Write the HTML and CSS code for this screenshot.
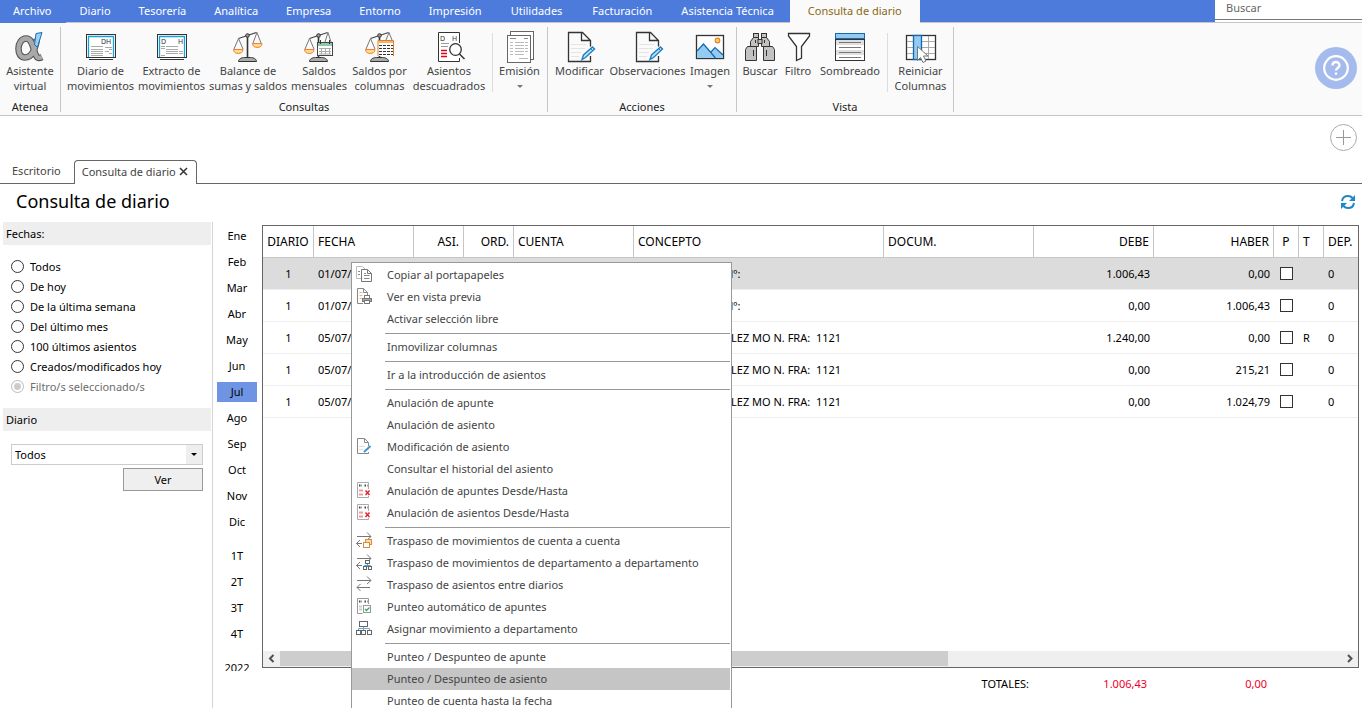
FILE: index.html
```html
<!DOCTYPE html>
<html lang="es">
<head>
<meta charset="utf-8">
<title>Consulta de diario</title>
<link rel="stylesheet" href="styles.css">
</head>
<body>
<svg class="sprite" aria-hidden="true">
  <symbol id="scale-left" viewBox="0 0 32 32">
    <path d="M15.500 5v22" fill="none" stroke="#333" stroke-width="1.600"/>
    <path d="M6.500 7.500l9-3M15.500 4.500l9-3" fill="none" stroke="#444" stroke-width="1.300"/>
    <circle cx="15.500" cy="4.500" r="1.800" fill="#999" stroke="#333"/>
    <path d="M6.500 7.500L2 18M6.500 7.500L11 18" fill="none" stroke="#777"/>
    <path d="M1.500 18.500h9.500c0 2.500-2 4-4.700 4s-4.800-1.500-4.800-4z" fill="#ffd98c" stroke="#ee8133"/>
    <path d="M6.500 30.500c0-2.500 3-4 6-4h6c3 0 6 1.500 6 4z" fill="#aaa" stroke="#333"/>
  </symbol>
  <symbol id="page-edit" viewBox="0 0 32 32">
    <path d="M26.500 25v5.500h-22v-29h14l8 8v6M17.500 1.500v8h9" fill="none" stroke="#333" stroke-width="1.300"/>
    <path d="M7 13.500h15M7 17.500h14M7 21.500h10M7 25.500h8" stroke="#e4e4e4"/>
    <path d="M18 28.500l1.500-4.500 9-8 2 2-9 8.500z" fill="#bfe2f7" stroke="#1e80c4" stroke-width="1.400"/>
    <path d="M26.500 17.500l2.500 2.500" stroke="#1e80c4"/>
  </symbol>
  <symbol id="doc-delete" viewBox="0 0 16 16">
    <path d="M12.500 7V.500h-11v15h11V14" fill="none" stroke="#aaa"/>
    <path d="M3 3.500h3M8.500 3.500h3" stroke="#444" stroke-width="2" stroke-dasharray="1.500 1"/>
    <path d="M3 8.500h4M3 12.500h4" stroke="#f19a9a" stroke-width="2"/>
    <path d="M9.500 8.500l4 4.500M13.500 8.500l-4 4.500" stroke="#e3262b" stroke-width="1.500"/>
  </symbol>
  <symbol id="arrow-right" viewBox="0 0 16 16">
    <path d="M1 4.500h14M11 .500l4 4-4 3.500" fill="none" stroke="#777"/>
  </symbol>
</svg>

<header class="topbar">
  <nav class="menubar" aria-label="Menú principal">
    <button class="menu-file">Archivo</button>
    <button>Diario</button>
    <button>Tesorería</button>
    <button>Analítica</button>
    <button>Empresa</button>
    <button>Entorno</button>
    <button>Impresión</button>
    <button class="menu-wide">Utilidades</button>
    <button class="menu-wide">Facturación</button>
    <button>Asistencia Técnica</button>
    <button class="menu-active">Consulta de diario</button>
  </nav>
  <div class="search"><input type="text" placeholder="Buscar" aria-label="Buscar"></div>
</header>

<section class="ribbon" aria-label="Cinta de opciones">
  <div class="group">
    <div class="tools tools-atenea">
      <button class="tool">
        <svg viewBox="0 0 32 32" aria-hidden="true">
          <path d="M23 8c-2 11-5 18.500-12 18.500-4.500 0-6.500-4-6.500-9s3-10 7.500-10c7 0 7 11 10 17 1 2.500 3 3 6 1.500" fill="none" stroke="#555" stroke-width="6.600"/>
          <path d="M23 8c-2 11-5 18.500-12 18.500-4.500 0-6.500-4-6.500-9s3-10 7.500-10c7 0 7 11 10 17 1 2.500 3 3 6 1.500" fill="none" stroke="#a9a9a9" stroke-width="4.400"/>
          <path d="M22 2.500l6-1-4.500 14.500-3-2z" fill="#9bd0f5" stroke="#1a6fb5"/>
        </svg>
        <span>Asistente virtual</span>
      </button>
    </div>
    <div class="group-name">Atenea</div>
  </div>

  <div class="group">
    <div class="tools tools-consultas">
      <button class="tool">
        <svg viewBox="0 0 32 32" aria-hidden="true">
          <rect x="1.500" y="3.500" width="29" height="23" fill="#fff" stroke="#333"/>
          <path d="M3.500 26V5.500h25V26" fill="none" stroke="#16a0dc" stroke-width="1.300"/>
          <text class="icon-text" x="16" y="13">DH</text>
          <path d="M6 15.500h12M20 16.500h7M6 18.500h12M6 20.500h12M6 22.500h12M20 20.500h4M24 18.500h3M24 22.500h3M6 24.500h12" stroke="#aaa"/>
          <path d="M4 28.500h24" stroke="#333"/>
        </svg>
        <span>Diario de movimientos</span>
      </button>
      <button class="tool">
        <svg viewBox="0 0 32 32" aria-hidden="true">
          <rect x="1.500" y="3.500" width="29" height="23" fill="#fff" stroke="#333"/>
          <path d="M3.500 26V5.500h25V26" fill="none" stroke="#16a0dc" stroke-width="1.300"/>
          <text class="icon-text" x="5" y="13">D</text>
          <text class="icon-text" x="22" y="13">H</text>
          <path d="M5 15.500h4M10 15.500h12M5 17.500h4M10 18.500h12M10 20.500h12M10 22.500h12M23 20.500h4M23 22.500h4M5 24.500h4" stroke="#aaa"/>
          <path d="M4 28.500h24" stroke="#333"/>
        </svg>
        <span>Extracto de movimientos</span>
      </button>
      <button class="tool">
        <svg viewBox="0 0 32 32" aria-hidden="true">
          <use href="#scale-left"/>
          <path d="M25 1.500L21 12M25 1.500L29 12" stroke="#777"/>
          <path d="M20.500 12.500h9.500c0 2.500-2 4-4.700 4s-4.800-1.500-4.800-4z" fill="#ffd98c" stroke="#ee8133"/>
        </svg>
        <span>Balance de sumas y saldos</span>
      </button>
      <button class="tool">
        <svg viewBox="0 0 32 32" aria-hidden="true">
          <use href="#scale-left"/>
          <path d="M25 1.500L22 11M25 1.500L28 11" stroke="#777"/>
          <rect x="14.500" y="11.500" width="15" height="13" fill="#fff" stroke="#444"/>
          <path d="M15 13.500h14" stroke="#8fc9a3" stroke-width="3"/>
          <path d="M17.500 9v4M26.500 9v4" stroke="#333"/>
          <path d="M16 17.500h12M16 20.500h12M18.500 17v6M22.500 17v6M26.500 17v6M16 23h12" stroke="#aaa"/>
        </svg>
        <span>Saldos mensuales</span>
      </button>
      <button class="tool">
        <svg viewBox="0 0 32 32" aria-hidden="true">
          <use href="#scale-left"/>
          <path d="M25 1.500L22 9M25 1.500L28 9" stroke="#777"/>
          <rect x="14" y="9.500" width="15.500" height="15.500" fill="#fff"/>
          <path d="M14 25V9.500h15.500V25" fill="#fff" stroke="#d9822b"/>
          <path d="M14 11h15" stroke="#f2b66d" stroke-width="2"/>
          <path d="M15 14.500h14M15 17.500h14M15 20.500h14M15 23.500h14" stroke="#333" stroke-dasharray="3 1"/>
        </svg>
        <span>Saldos por columnas</span>
      </button>
      <button class="tool">
        <svg viewBox="0 0 32 32" aria-hidden="true">
          <path d="M26.500 12V1.500h-21v29h21V27" fill="#fff" stroke="#333"/>
          <text class="icon-text" x="7" y="10">D</text>
          <text class="icon-text" x="19" y="10">H</text>
          <path d="M8 12.500h8M8 15.500h7" stroke="#999"/>
          <path d="M8 19.500h6M8 22.500h6M8 25.500h6" stroke="#e2001a" stroke-width="1.300"/>
          <circle cx="22.500" cy="18.500" r="5.800" fill="#fff" stroke="#333" stroke-width="1.300"/>
          <path d="M26.500 23l5 5" stroke="#333" stroke-width="1.500"/>
        </svg>
        <span>Asientos descuadrados</span>
      </button>
      <button class="tool tool-split">
        <svg viewBox="0 0 32 32" aria-hidden="true">
          <rect x="6.500" y=".500" width="23" height="28" fill="#fff" stroke="#666"/>
          <rect x="3.500" y="4.500" width="23" height="27" fill="#fff" stroke="#666"/>
          <path d="M6 7.500h6M20 7.500h4" stroke="#888"/>
          <path d="M6 11.500h3M11 11.500h9M21 11.500h3M6 14.500h3M11 14.500h9M21 14.500h3M6 17.500h3M11 17.500h9M21 17.500h3M6 20.500h3M11 20.500h9M21 20.500h3M6 23.500h3M11 23.500h9M15 27.500h9" stroke="#bbb"/>
        </svg>
        <span>Emisión</span>
        <i class="caret"></i>
      </button>
    </div>
    <div class="group-name">Consultas</div>
  </div>

  <div class="group">
    <div class="tools tools-acciones">
      <button class="tool"><svg viewBox="0 0 32 32" aria-hidden="true"><use href="#page-edit"/></svg><span>Modificar</span></button>
      <button class="tool"><svg viewBox="0 0 32 32" aria-hidden="true"><use href="#page-edit"/></svg><span>Observaciones</span></button>
      <button class="tool">
        <svg viewBox="0 0 32 32" aria-hidden="true">
          <rect x="2.500" y="4.500" width="27" height="23" fill="#fff" stroke="#333" stroke-width="1.300"/>
          <path d="M3 20l6.500-7 8 8 3.500-4 8 6v4H3z" fill="#93cbf2"/>
          <path d="M3 20l6.500-7 12 14M17 21l4-4.500 8 7.500" fill="none" stroke="#1468b0" stroke-width="1.200"/>
          <circle cx="23.500" cy="9.500" r="2.300" fill="#ffd54f" stroke="#ef7d31" stroke-width="1.200"/>
        </svg>
        <span>Imagen</span>
        <i class="caret"></i>
      </button>
    </div>
    <div class="group-name">Acciones</div>
  </div>

  <div class="group">
    <div class="tools tools-vista">
      <button class="tool">
        <svg viewBox="0 0 32 32" aria-hidden="true">
          <g fill="#c4c2c0" stroke="#333">
            <rect x="9.500" y="2.500" width="5" height="4"/><rect x="17.500" y="2.500" width="5" height="4"/>
            <path d="M6.500 15.500v-5l3-4h5v9zM25.500 15.500v-5l-3-4h-5v9z"/>
            <rect x="14" y="8.500" width="4" height="4"/>
            <path d="M1.500 29.500v-11l2-3h9v14zM30.500 29.500v-11l-2-3h-9v14z"/>
          </g>
          <path d="M11.500 9v3M20.500 9v3M9.500 19v6M22.500 19v6" stroke="#333"/>
        </svg>
        <span>Buscar</span>
      </button>
      <button class="tool">
        <svg viewBox="0 0 32 32" aria-hidden="true">
          <path d="M6.500 2.500h21v2.500l-8 10.500v11.500l-5 2.500v-14l-8-10.500z" fill="#fff" stroke="#333" stroke-width="1.300"/>
        </svg>
        <span>Filtro</span>
      </button>
      <button class="tool">
        <svg viewBox="0 0 32 32" aria-hidden="true">
          <rect x="1.500" y="8.500" width="29" height="21" fill="#fff" stroke="#333"/>
          <path d="M2 11.500h28M2 21.500h28" stroke="#e2e0de" stroke-width="5"/>
          <path d="M5 11.500h22M5 16.500h22M5 21.500h22M5 26.500h22" stroke="#777"/>
          <rect x="1.500" y="2.500" width="29" height="5" fill="#93cbf2" stroke="#1468b0"/>
        </svg>
        <span>Sombreado</span>
      </button>
      <button class="tool tool-split">
        <svg viewBox="0 0 32 32" aria-hidden="true">
          <rect x="1.500" y="4.500" width="29" height="24" fill="#fff" stroke="#333" stroke-width="1.300"/>
          <path d="M2 10.500h28M2 16.500h28M2 22.500h28M23.500 5v23" stroke="#aaa"/>
          <rect x="8.500" y="4.500" width="8" height="24" fill="#93cbf2" stroke="#1468b0" stroke-width="1.300"/>
          <path d="M12.500 15.500v14l3-3 2.500 5 3-1.500-2.500-5h4.500z" fill="#fff" stroke="#777"/>
        </svg>
        <span>Reiniciar Columnas</span>
      </button>
    </div>
    <div class="group-name">Vista</div>
  </div>

  <button class="help" aria-label="Ayuda">
    <svg viewBox="0 0 42 42" aria-hidden="true">
      <circle cx="21" cy="21" r="11.800" fill="none" stroke="#fff" stroke-width="2.200"/>
      <path d="M17.500 18.500c0-2 1.500-3.500 3.500-3.500s3.500 1.500 3.500 3.300c0 2.700-3.500 2.700-3.500 5.200M21 25.500v2.300" fill="none" stroke="#fff" stroke-width="2.300"/>
    </svg>
  </button>
</section>

<nav class="pages" aria-label="Páginas abiertas">
  <button class="page">Escritorio</button>
  <div class="page page-current">
    <button>Consulta de diario</button>
    <button aria-label="Cerrar">
      <svg class="close" viewBox="0 0 9 9" aria-hidden="true"><path d="M1 1l7 7M8 1L1 8" stroke="#333" stroke-width="1.500"/></svg>
    </button>
  </div>
  <button class="add" aria-label="Añadir">
    <svg viewBox="0 0 28 28" aria-hidden="true"><circle cx="13.500" cy="13.500" r="13" fill="none" stroke="#aaa"/><path d="M6 13.500h15M13.500 6v15" stroke="#999"/></svg>
  </button>
</nav>

<div class="heading">
  <h1>Consulta de diario</h1>
  <button class="refresh" aria-label="Actualizar">
    <svg viewBox="0 0 16 16" aria-hidden="true">
      <path d="M2 7c.500-3 3-5 6-5 2 0 3.500.800 4.500 2M14 9c-.500 3-3 5-6 5-2 0-3.500-.800-4.500-2" fill="none" stroke="#1e88c8" stroke-width="2"/>
      <path d="M15 1v6H9zM1 15V9h6z" fill="#1e88c8"/>
    </svg>
  </button>
</div>

<main class="content">
  <aside class="filters">
    <h2>Fechas:</h2>
    <div class="radios">
      <label><input type="radio" name="fechas">Todos</label>
      <label><input type="radio" name="fechas">De hoy</label>
      <label><input type="radio" name="fechas">De la última semana</label>
      <label><input type="radio" name="fechas">Del último mes</label>
      <label><input type="radio" name="fechas">100 últimos asientos</label>
      <label><input type="radio" name="fechas">Creados/modificados hoy</label>
      <label class="disabled"><input type="radio" name="fechas" checked disabled>Filtro/s seleccionado/s</label>
    </div>
    <h2 id="diario-title">Diario</h2>
    <div class="diary">
      <div class="combo">
        <select aria-labelledby="diario-title"><option>Todos</option></select>
        <i class="combo-arrow"></i>
      </div>
      <button class="view">Ver</button>
    </div>
  </aside>

  <nav class="periods" aria-label="Periodos">
    <button>Ene</button><button>Feb</button><button>Mar</button><button>Abr</button>
    <button>May</button><button>Jun</button><button class="selected">Jul</button><button>Ago</button>
    <button>Sep</button><button>Oct</button><button>Nov</button><button>Dic</button>
    <button class="spaced">1T</button><button>2T</button><button>3T</button><button>4T</button>
    <button class="year">2022</button>
  </nav>

  <section class="ledger">
    <div class="grid">
      <table>
        <colgroup>
          <col class="w51"><col class="w100"><col class="w50"><col class="w50"><col class="w120"><col class="w250">
          <col><col class="w120"><col class="w120"><col class="w25"><col class="w25"><col class="w34">
        </colgroup>
        <thead>
          <tr><th class="mid">DIARIO</th><th>FECHA</th><th class="num">ASI.</th><th class="num">ORD.</th><th>CUENTA</th><th>CONCEPTO</th><th>DOCUM.</th><th class="num">DEBE</th><th class="num">HABER</th><th class="mid">P</th><th>T</th><th>DEP.</th></tr>
        </thead>
        <tbody>
          <tr class="current"><td class="mid">1</td><td>01/07/</td><td></td><td></td><td></td><td class="concept-short">Nº:</td><td></td><td class="num">1.006,43</td><td class="num">0,00</td><td class="check"><input type="checkbox" aria-label="Punteado 1"></td><td></td><td>0</td></tr>
          <tr><td class="mid">1</td><td>01/07/</td><td></td><td></td><td></td><td class="concept-short">Nº:</td><td></td><td class="num">0,00</td><td class="num">1.006,43</td><td class="check"><input type="checkbox" aria-label="Punteado 2"></td><td></td><td>0</td></tr>
          <tr><td class="mid">1</td><td>05/07/</td><td></td><td></td><td></td><td class="concept">LEZ MO N. FRA:&nbsp; 1121</td><td></td><td class="num">1.240,00</td><td class="num">0,00</td><td class="check"><input type="checkbox" aria-label="Punteado 3"></td><td>R</td><td>0</td></tr>
          <tr><td class="mid">1</td><td>05/07/</td><td></td><td></td><td></td><td class="concept">LEZ MO N. FRA:&nbsp; 1121</td><td></td><td class="num">0,00</td><td class="num">215,21</td><td class="check"><input type="checkbox" aria-label="Punteado 4"></td><td></td><td>0</td></tr>
          <tr><td class="mid">1</td><td>05/07/</td><td></td><td></td><td></td><td class="concept">LEZ MO N. FRA:&nbsp; 1121</td><td></td><td class="num">0,00</td><td class="num">1.024,79</td><td class="check"><input type="checkbox" aria-label="Punteado 5"></td><td></td><td>0</td></tr>
        </tbody>
      </table>
      <div class="scrollbar" aria-hidden="true">
        <svg viewBox="0 0 17 15"><path d="M10.500 4L7 7.500l3.500 3.500" fill="none" stroke="#505050" stroke-width="2"/></svg>
        <div class="track"><div class="thumb"></div></div>
        <svg viewBox="0 0 17 15"><path d="M7 4l3.500 3.500L7 11" fill="none" stroke="#505050" stroke-width="2"/></svg>
      </div>
    </div>
    <div class="totals">
      <span>TOTALES:</span><output>1.006,43</output><output>0,00</output>
    </div>

    <div class="context-menu" role="menu">
      <button role="menuitem">
        <svg viewBox="0 0 16 16" aria-hidden="true"><path d="M5 12.500H.500v-12h6l3 3" fill="none" stroke="#bbb"/><path d="M5.500 3.500h6l4 4v8h-10zM11.500 3.500v4h4" fill="#fff" stroke="#777"/><path d="M8 7.500h2M8 9.500h5.500M8 12.500h5.500M2 5.500h2M2 8.500h2" stroke="#888"/></svg>
        Copiar al portapapeles
      </button>
      <button role="menuitem">
        <svg viewBox="0 0 16 16" aria-hidden="true"><path d="M7 15.500H1.500V.500h6l4 4v3M7.500.500v4h4" fill="none" stroke="#888"/><path d="M3.500 4.500h3M3.500 7.500h3M3.500 10.500h2" stroke="#e8b878"/><rect x="8.500" y="7.500" width="5" height="3" fill="#fff" stroke="#777"/><rect x="6.500" y="10.500" width="9" height="3" fill="#aaa" stroke="#777"/><rect x="8.500" y="12.500" width="5" height="3" fill="#fff" stroke="#777"/></svg>
        Ver en vista previa
      </button>
      <button role="menuitem">Activar selección libre</button>
      <hr>
      <button role="menuitem">Inmovilizar columnas</button>
      <hr>
      <button role="menuitem">Ir a la introducción de asientos</button>
      <hr>
      <button role="menuitem">Anulación de apunte</button>
      <button role="menuitem">Anulación de asiento</button>
      <button role="menuitem">
        <svg viewBox="0 0 16 16" aria-hidden="true"><path d="M12.500 8V4.500l-4-4h-7v15h11V14M8.500.500v4h4" fill="none" stroke="#888"/><path d="M3 8.500h6M3 11.500h4" stroke="#ddd"/><path d="M8 14l6.500-6" stroke="#3b97d3" stroke-width="2"/></svg>
        Modificación de asiento
      </button>
      <button role="menuitem">Consultar el historial del asiento</button>
      <button role="menuitem"><svg viewBox="0 0 16 16" aria-hidden="true"><use href="#doc-delete"/></svg>Anulación de apuntes Desde/Hasta</button>
      <button role="menuitem"><svg viewBox="0 0 16 16" aria-hidden="true"><use href="#doc-delete"/></svg>Anulación de asientos Desde/Hasta</button>
      <hr>
      <button role="menuitem">
        <svg viewBox="0 0 16 16" aria-hidden="true"><use href="#arrow-right"/><path d="M6 11.500H.500M4 8l-3.500 3.500L4 15" fill="none" stroke="#777"/><rect x="9.500" y="7.500" width="6" height="5" fill="#fcd9ae" stroke="#dd8a3c"/><rect x="7.500" y="10.500" width="6" height="5" fill="#fff" stroke="#dd8a3c"/></svg>
        Traspaso de movimientos de cuenta a cuenta
      </button>
      <button role="menuitem">
        <svg viewBox="0 0 16 16" aria-hidden="true"><use href="#arrow-right"/><path d="M6 11.500H.500M4 8l-3.500 3.500L4 15" fill="none" stroke="#777"/><path d="M11.500 10v3M8.500 13v-1.500h6V13" fill="none" stroke="#4a9bd6"/><g fill="#fff" stroke="#666"><rect x="9.500" y="6.500" width="4" height="3"/><rect x="7.500" y="12.500" width="3" height="3"/><rect x="12.500" y="12.500" width="3" height="3"/></g></svg>
        Traspaso de movimientos de departamento a departamento
      </button>
      <button role="menuitem">
        <svg viewBox="0 0 16 16" aria-hidden="true"><use href="#arrow-right"/><path d="M14 11.500H1M4.500 8L1 11.500 4.500 15" fill="none" stroke="#777"/></svg>
        Traspaso de asientos entre diarios
      </button>
      <button role="menuitem">
        <svg viewBox="0 0 16 16" aria-hidden="true"><path d="M12.500 6V.500h-11v15h5" fill="none" stroke="#999"/><path d="M3 3.500h3M8.500 3.500h3" stroke="#444" stroke-width="2" stroke-dasharray="1.500 1"/><path d="M3 8.500h3M3 11.500h3" stroke="#ccc" stroke-width="2"/><rect x="7.500" y="7.500" width="7" height="7" fill="#fff" stroke="#999"/><path d="M9 11l1.500 1.500 3-3" fill="none" stroke="#2fae63" stroke-width="1.300"/></svg>
        Punteo automático de apuntes
      </button>
      <button role="menuitem">
        <svg viewBox="0 0 16 16" aria-hidden="true"><path d="M7.500 6v5M2.500 11V8.500h11V11" fill="none" stroke="#69a9d8"/><g fill="#fff" stroke="#666"><rect x="3.500" y="1.500" width="8" height="5"/><rect x=".500" y="10.500" width="4" height="4"/><rect x="5.500" y="10.500" width="4" height="4"/><rect x="11.500" y="10.500" width="4" height="4"/></g></svg>
        Asignar movimiento a departamento
      </button>
      <hr>
      <button role="menuitem">Punteo / Despunteo de apunte</button>
      <button role="menuitem" class="hover">Punteo / Despunteo de asiento</button>
      <button role="menuitem">Punteo de cuenta hasta la fecha</button>
    </div>
  </section>
</main>
</body>
</html>
```
FILE: styles.css
```css
* { box-sizing: border-box; }

html, body { height: 100%; }

body {
  margin: 0;
  display: flex;
  flex-direction: column;
  overflow: hidden;
  background: #fff;
  color: #000;
  font: 11px/15px "Noto Sans", "Open Sans", sans-serif;
}

button, input, select { font: inherit; color: inherit; }

button {
  padding: 0;
  border: 0;
  background: none;
}

svg { display: block; flex: none; }

.sprite { position: absolute; width: 0; height: 0; }

.icon-text { font: 7px "Noto Sans", sans-serif; fill: #333; }

/* Menu bar */
.topbar {
  display: flex;
  flex: none;
  height: 23px;
  background: #4d7bdc;
  border-bottom: 1px solid #c6c6c6;
}

.menubar { display: flex; flex: 1; color: #fff; }

.menubar button { padding: 0 14px 2px; white-space: nowrap; }

.menubar .menu-wide { padding: 0 15px 2px; }

.menubar .menu-file { height: 23px; padding: 0 14px 3px 13px; background: #4d7bdc; }

.menubar .menu-active {
  height: 23px;
  margin-left: 2px;
  padding: 0 18px 3px;
  background: #fafafa;
  color: #8a6914;
}

.search { width: 147px; background: #fff; }

.search input {
  display: block;
  width: 100%;
  height: 20px;
  padding: 0 11px 4px;
  border: 0;
  border-bottom: 1px solid #777;
  background: #fff;
  outline: 0;
}

.search input::placeholder { color: #666; opacity: 1; }

/* Ribbon */
.ribbon {
  display: flex;
  flex: none;
  align-items: flex-start;
  height: 93px;
  padding-top: 4px;
  background: #fafafa;
  border-bottom: 1px solid #c6c6c6;
}

.group { height: 85px; border-right: 1px solid #c6c6c6; }

.group-name { text-align: center; line-height: 16px; color: #222; }

.tools { display: grid; height: 72px; padding-top: 4px; }

.tools-atenea { grid-template-columns: 60px; }
.tools-consultas { grid-template-columns: 4px 71px 71px 82px 60px 61px 78px 4px 54px 1px; }
.tools-consultas .tool:first-child { grid-column: 2; }
.tools-consultas .tool-split { grid-column: 9; }
.tools-acciones { grid-template-columns: 63px 73px 52px; }
.tools-vista { grid-template-columns: 46px 30px 74px 66px; }

.tool {
  display: flex;
  flex-direction: column;
  align-items: center;
  justify-content: flex-start;
  color: #444;
}

.tool svg { width: 32px; height: 32px; }

.tool-split { height: 59px; margin-top: 2px; border-left: 1px solid #ddd; }

.tool-split svg { margin-top: -2px; }

.caret {
  margin-top: 7px;
  border: 3px solid transparent;
  border-top-color: #777;
  border-bottom: 0;
}

.help {
  width: 42px;
  height: 42px;
  margin: 20px 5px 0 auto;
  border-radius: 50%;
  background: #a5bbed;
}

/* Open pages */
.pages {
  display: flex;
  flex: none;
  align-items: flex-end;
  height: 68px;
  border-bottom: 1px solid #666;
  color: #444;
}

.page { height: 24px; padding: 0 0 2px 12px; }

.page-current {
  display: flex;
  align-items: center;
  gap: 3px;
  height: 24px;
  margin: 0 0 -1px 13px;
  padding: 0 8px 3px 7px;
  border: 1px solid #666;
  border-bottom: 0;
  border-radius: 4px 4px 0 0;
  background: #fff;
}

.close { width: 9px; height: 9px; }

.add {
  align-self: flex-start;
  width: 28px;
  height: 28px;
  margin: 8px 4px 0 auto;
}

.heading {
  display: flex;
  flex: none;
  align-items: center;
  justify-content: space-between;
  height: 38px;
  padding: 0 6px 2px 16px;
}

h1 { margin: 0; padding-bottom: 2px; font-size: 18px; line-height: 24px; font-weight: 400; }

.refresh svg { width: 16px; height: 16px; }

/* Filters */
.content { display: flex; flex: 1; min-height: 0; }

.filters { width: 213px; padding-left: 3px; border-right: 1px solid #d5d5d5; }

h2 {
  margin: 0 1px 0 0;
  padding-left: 3px;
  background: #eee;
  font-size: 11px;
  line-height: 23px;
  font-weight: 400;
}

.radios { padding: 12px 0 11px 8px; }

.radios label { display: flex; align-items: center; gap: 6px; height: 20px; padding-bottom: 1px; }

.radios input {
  appearance: none;
  width: 13px;
  height: 13px;
  margin: 0;
  border: 1px solid #333;
  border-radius: 50%;
  background: #fff;
}

.radios .disabled { color: #6d6d6d; }

.radios input:disabled {
  border-color: #bbb;
  background: radial-gradient(circle, #ccc 3px, #fff 4px);
}

.diary { padding: 13px 9px 0 8px; }

.combo { display: flex; height: 21px; border: 1px solid #ccc; }

.combo select {
  appearance: none;
  flex: 1;
  padding: 0 3px;
  border: 0;
  border-radius: 0;
  background: #fff;
}

.combo-arrow {
  display: grid;
  place-items: center;
  width: 16px;
  background: #eee;
}

.combo-arrow::before {
  content: "";
  border: 3px solid transparent;
  border-top-color: #000;
  border-bottom: 0;
}

.view {
  display: block;
  width: 80px;
  height: 23px;
  margin: 3px 0 0 auto;
  border: 1px solid #999;
  background: #efefef;
}

/* Periods */
.periods {
  display: flex;
  flex-direction: column;
  gap: 6px;
  width: 49px;
  padding: 4px 5px 0 4px;
}

.periods button { flex: none; height: 20px; padding-bottom: 2px; }

.periods .selected { background: #6f94e3; }

.periods .spaced { margin-top: 8px; }

.periods .year {
  display: flex;
  align-items: flex-start;
  justify-content: center;
  height: 13px;
  margin-top: 8px;
  padding: 2px 0 0;
  overflow: hidden;
}

/* Ledger */
.ledger {
  position: relative;
  display: flex;
  flex: 1;
  flex-direction: column;
  min-width: 0;
  padding: 3px 3px 0 0;
}

.grid {
  display: flex;
  flex: 1;
  flex-direction: column;
  justify-content: space-between;
  border: 1px solid #666;
}

table { width: 100%; border-collapse: separate; border-spacing: 0; table-layout: fixed; }

.w25 { width: 25px; }
.w34 { width: 34px; }
.w50 { width: 50px; }
.w51 { width: 51px; }
.w100 { width: 100px; }
.w120 { width: 120px; }
.w250 { width: 250px; }

th, td {
  height: 32px;
  padding: 0 4px;
  font-weight: 400;
  text-align: left;
  white-space: nowrap;
}

th { border-right: 1px solid #c6c6c6; border-bottom: 1px solid #c6c6c6; font-size: 12px; }

th:last-child { border-right: 0; }

td { border-bottom: 1px solid #eee; }

.num { text-align: right; }
.mid { padding: 0; text-align: center; }

.concept { padding-left: 97px; }
.concept-short { padding-left: 91px; }

.current td { background: #dcdcdc; }

.check { padding: 0 6px; }

.check input {
  appearance: none;
  display: block;
  width: 13px;
  height: 13px;
  margin: 0;
  border: 1px solid #333;
  background: #fff;
}

.scrollbar { display: flex; height: 16px; padding-bottom: 1px; background: #efefef; }

.scrollbar svg { width: 17px; height: 15px; }

.track { flex: 1; }

.thumb { width: 63%; height: 100%; background: #cdcdcd; }

.totals {
  display: grid;
  grid-template-columns: 1fr 118px 120px 92px;
  height: 40px;
  padding-top: 7px;
  line-height: 17px;
  text-align: right;
}

.totals output { color: #f00028; }

/* Context menu floating over the ledger */
.context-menu {
  position: absolute;
  top: 40px;
  left: 89px;
  width: 381px;
  padding: 1px 1px 1px 0;
  border: 1px solid #999;
  background: #fff;
  color: #444;
}

.context-menu button {
  display: flex;
  align-items: center;
  width: 100%;
  height: 22px;
  padding: 0 0 2px 35px;
  text-align: left;
}

.context-menu svg { width: 16px; height: 16px; margin: 0 15px 0 -31px; }

.context-menu .hover { background: #c5c5c5; }

hr { height: 1px; margin: 3px 0 2px 33px; border: 0; background: #999; }
```
